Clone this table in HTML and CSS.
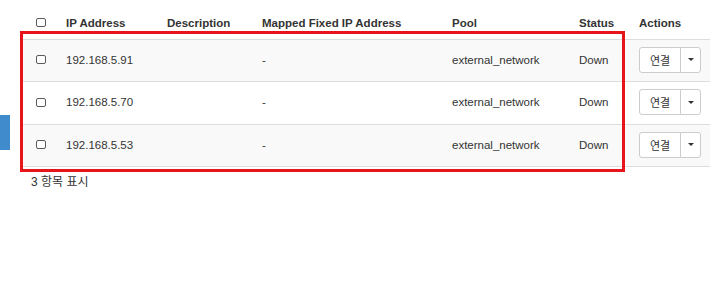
FILE: index.html
```html
<!DOCTYPE html>
<html lang="ko">
<head>
<meta charset="utf-8">
<title>Floating IPs</title>
<link rel="stylesheet" href="styles.css">
</head>
<body>
<div class="side-tab"></div>
<div class="page">
  <table class="ip-table">
    <colgroup>
      <col class="c-check">
      <col class="c-ip">
      <col class="c-desc">
      <col class="c-mapped">
      <col class="c-pool">
      <col class="c-status">
      <col class="c-actions">
    </colgroup>
    <thead>
      <tr>
        <th class="check"><span class="checkbox"></span></th>
        <th>IP Address</th>
        <th>Description</th>
        <th>Mapped Fixed IP Address</th>
        <th>Pool</th>
        <th>Status</th>
        <th>Actions</th>
      </tr>
    </thead>
    <tbody>
      <tr class="odd">
        <td class="check"><span class="checkbox"></span></td>
        <td>192.168.5.91</td>
        <td></td>
        <td>-</td>
        <td>external_network</td>
        <td>Down</td>
        <td><div class="btn-group"><button class="btn">연결</button><button class="btn caret-btn"><span class="caret"></span></button></div></td>
      </tr>
      <tr>
        <td class="check"><span class="checkbox"></span></td>
        <td>192.168.5.70</td>
        <td></td>
        <td>-</td>
        <td>external_network</td>
        <td>Down</td>
        <td><div class="btn-group"><button class="btn">연결</button><button class="btn caret-btn"><span class="caret"></span></button></div></td>
      </tr>
      <tr class="odd">
        <td class="check"><span class="checkbox"></span></td>
        <td>192.168.5.53</td>
        <td></td>
        <td>-</td>
        <td>external_network</td>
        <td>Down</td>
        <td><div class="btn-group"><button class="btn">연결</button><button class="btn caret-btn"><span class="caret"></span></button></div></td>
      </tr>
    </tbody>
  </table>
  <div class="table-footer">3 항목 표시</div>
  <div class="highlight"></div>
</div>
</body>
</html>
```
FILE: styles.css
```css
html, body {
  margin: 0;
  padding: 0;
  background: #fff;
}

body {
  font-family: "Liberation Sans", "Noto Sans CJK KR", Arial, sans-serif;
  font-size: 11.5px;
  color: #333;
}

.page {
  position: relative;
  padding: 8px 6px 0 22px;
}

/* left edge navigation tab peeking in */
.side-tab {
  position: absolute;
  left: 0;
  top: 115px;
  width: 10px;
  height: 35px;
  background: #3f8bcb;
}

.ip-table {
  width: 688px;
  table-layout: fixed;
  border-collapse: collapse;
}

.c-check { width: 36px; }
.c-ip { width: 101px; }
.c-desc { width: 95px; }
.c-mapped { width: 190px; }
.c-pool { width: 127px; }
.c-status { width: 60px; }
.c-actions { width: 79px; }

.ip-table th {
  text-align: left;
  font-weight: bold;
  height: 29px;
  padding: 0 8px 2px 8px;
  vertical-align: middle;
  white-space: nowrap;
}

.ip-table td {
  height: 39px;
  padding: 0 8px 2px 8px;
  border-top: 1px solid #ddd;
  vertical-align: middle;
  white-space: nowrap;
}

.ip-table tbody tr:nth-child(2) td {
  height: 40px;
}

.ip-table tbody tr:last-child td {
  border-bottom: 1px solid #ddd;
}

.ip-table tr.odd td {
  background: #f9f9f9;
}

.ip-table .check {
  padding-left: 14px;
  padding-right: 0;
}

.checkbox {
  display: block;
  width: 8px;
  height: 7px;
  border: 1px solid #5a5a5a;
  border-radius: 2px;
  background: #fff;
}

.btn-group {
  display: flex;
  width: 62px;
  height: 26px;
}

.btn {
  box-sizing: border-box;
  height: 26px;
  margin: 0;
  padding: 0;
  font-family: "Noto Sans CJK KR", "Liberation Sans", sans-serif;
  font-size: 11px;
  color: #333;
  background: #fff;
  border: 1px solid #ccc;
  border-radius: 3px 0 0 3px;
  width: 42px;
  display: flex;
  align-items: center;
  justify-content: center;
}

.caret-btn {
  width: 21px;
  margin-left: -1px;
  border-radius: 0 3px 3px 0;
}

.caret {
  width: 0;
  height: 0;
  border-left: 3px solid transparent;
  border-right: 3px solid transparent;
  border-top: 3px solid #333;
}

.table-footer {
  padding: 7px 0 0 9px;
  font-size: 12px;
  line-height: 16px;
  color: #333;
}

/* red annotation frame around the rows */
.highlight {
  position: absolute;
  left: 20px;
  top: 31px;
  width: 599px;
  height: 135px;
  border: 3px solid #e8141c;
  pointer-events: none;
}
```
